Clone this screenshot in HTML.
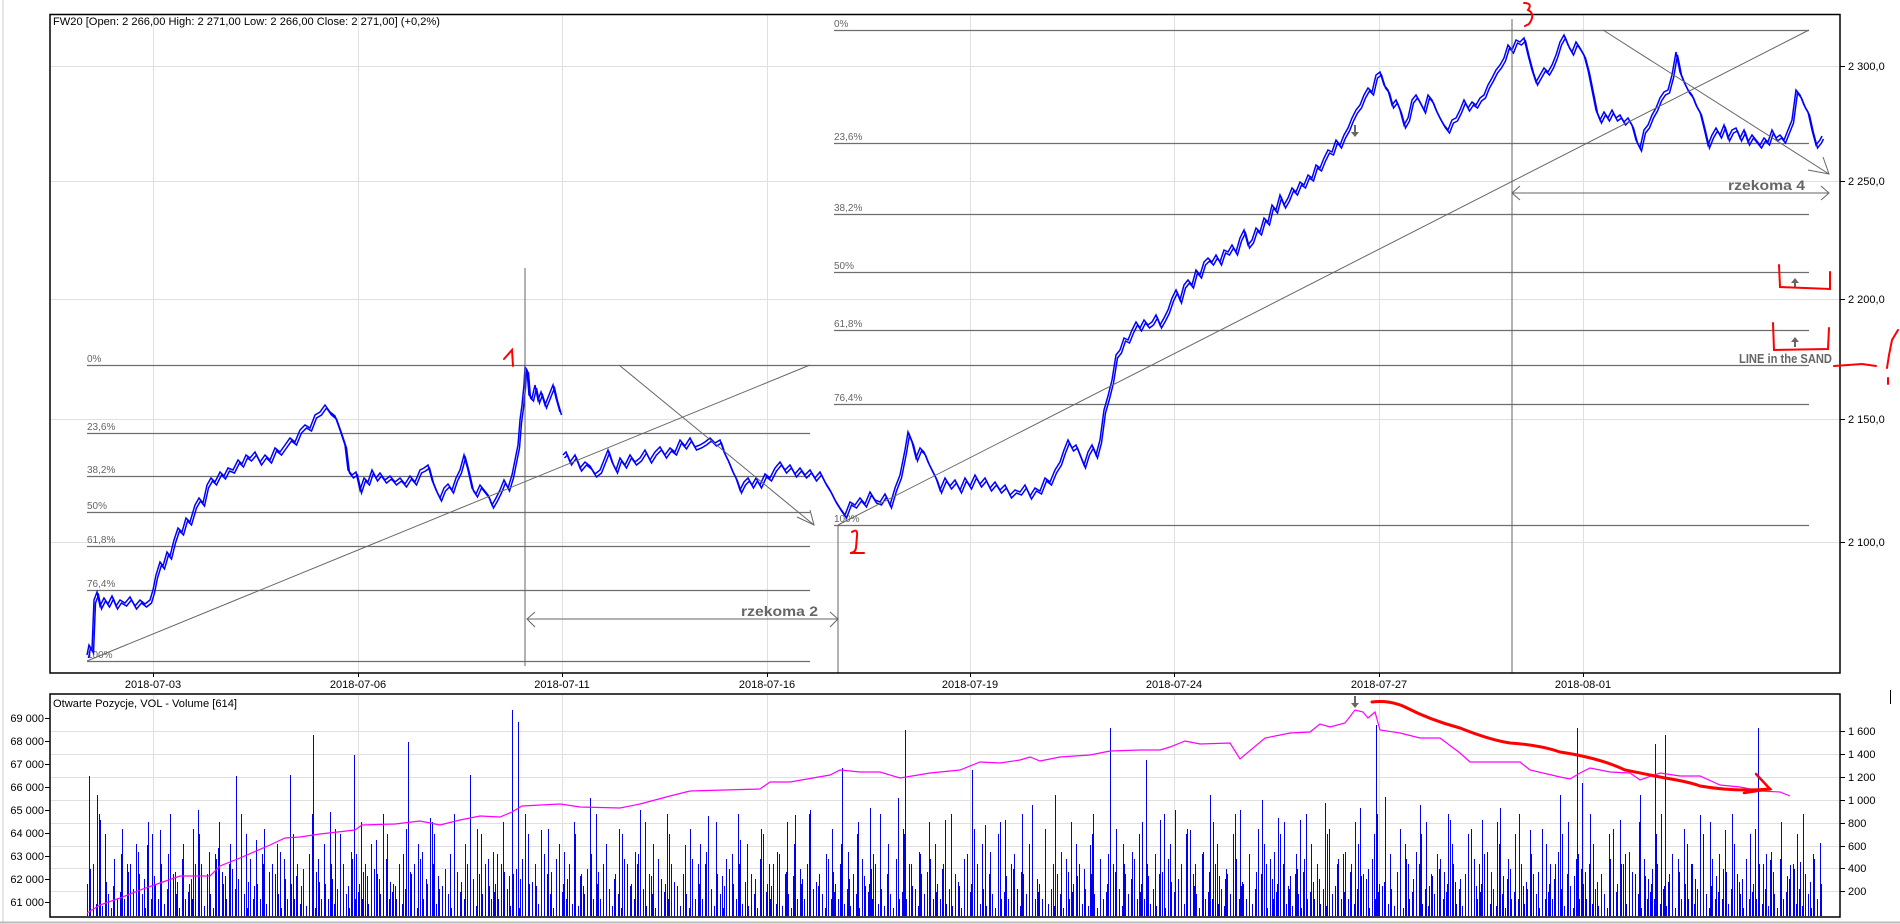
<!DOCTYPE html>
<html><head><meta charset="utf-8">
<style>
html,body{margin:0;padding:0;background:#fff;width:1900px;height:924px;overflow:hidden}
svg{display:block}
text{font-family:"Liberation Sans",sans-serif;}
</style></head>
<body>
<svg width="1900" height="924" xmlns="http://www.w3.org/2000/svg">
<defs>
<pattern id="vp1" x="87" y="694" width="34" height="222" patternUnits="userSpaceOnUse">
<path stroke="#0000ee" stroke-width="1" d="M0.5 222V190 M3.5 222V205 M6.5 222V170 M9.5 222V210 M12.5 222V195 M15.5 222V212 M18.5 222V180 M21.5 222V200 M24.5 222V214 M27.5 222V165 M30.5 222V205 M33.5 222V198"/>
</pattern>
<pattern id="vp2" x="88" y="694" width="47" height="222" patternUnits="userSpaceOnUse">
<path stroke="#0000ee" stroke-width="1" d="M1.5 222V150 M9.5 222V185 M17.5 222V140 M25.5 222V192 M33.5 222V160 M40.5 222V178"/>
</pattern>
<pattern id="vp3" x="86" y="694" width="71" height="222" patternUnits="userSpaceOnUse">
<path stroke="#0000ee" stroke-width="1" d="M4.5 222V175 M13.5 222V120 M20.5 222V188 M36.5 222V135 M44.5 222V170 M52.5 222V158 M62.5 222V128 M68.5 222V182"/>
</pattern>
<path id="pr" d="M87 655 L89 645 L92 650 L94 600 L97 592 L100 606 L104 598 L108 604 L112 596 L116 606 L120 600 L125 603 L130 597 L135 606 L140 600 L145 604 L150 600 L153 590 L156 575 L160 562 L163 566 L167 552 L170 556 L174 540 L178 528 L182 532 L186 518 L190 522 L195 505 L199 498 L203 503 L207 485 L211 478 L215 482 L220 472 L224 476 L228 468 L233 470 L238 460 L242 464 L246 455 L250 458 L255 452 L260 462 L265 455 L270 460 L275 448 L280 452 L285 445 L290 438 L295 442 L300 430 L305 425 L310 428 L315 415 L320 412 L325 405 L330 412 L335 416 L340 430 L345 445 L348 470 L352 475 L356 472 L360 490 L364 478 L368 482 L372 470 L376 478 L380 473 L385 480 L390 476 L395 482 L400 478 L405 484 L410 476 L415 482 L420 470 L424 468 L428 465 L432 480 L436 490 L440 498 L444 488 L448 484 L452 490 L456 478 L460 470 L464 455 L468 470 L472 488 L476 494 L480 485 L484 490 L488 495 L492 505 L496 498 L500 490 L504 480 L508 488 L512 475 L515 460 L518 445 L520 420 L522 405 L524 385 L525 367 L527 370 L529 395 L532 398 L535 385 L538 400 L541 392 L545 405 L549 395 L553 385 L556 398 L560 412
M563 455 L566 452 L570 462 L575 455 L580 468 L585 462 L590 466 L595 474 L600 470 L604 460 L608 450 L612 462 L616 470 L620 458 L625 465 L630 455 L635 462 L640 458 L645 450 L650 460 L655 452 L660 447 L665 455 L670 448 L675 452 L680 440 L685 446 L690 438 L695 447 L700 445 L705 442 L710 438 L715 443 L720 440 L724 452 L728 460 L732 470 L736 478 L740 490 L744 482 L748 478 L752 485 L756 478 L760 485 L765 474 L770 478 L775 468 L780 462 L785 470 L790 465 L795 474 L800 468 L805 475 L810 470 L815 478 L820 472 L825 482 L830 490 L835 500 L840 508 L845 515 L850 502 L855 505 L860 498 L865 504 L870 492 L875 500 L880 502 L885 494 L890 505 L895 488 L900 475 L905 450 L908 432 L912 442 L916 458 L920 448 L924 452 L928 462 L932 470 L936 478 L940 490 L945 478 L950 486 L955 480 L960 490 L965 478 L970 486 L975 475 L980 484 L985 478 L990 488 L995 482 L1000 490 L1005 485 L1010 495 L1015 490 L1020 492 L1025 485 L1030 496 L1035 488 L1040 491 L1045 478 L1050 482 L1055 470 L1060 462 L1064 450 L1068 440 L1072 448 L1076 445 L1080 455 L1084 465 L1088 452 L1092 445 L1096 455 L1100 440 L1104 410 L1108 396 L1112 380 L1116 355 L1120 350 L1124 338 L1128 340 L1132 330 L1136 322 L1140 328 L1144 320 L1148 325 L1152 322 L1156 315 L1160 325 L1164 318 L1168 310 L1172 298 L1176 290 L1180 300 L1184 285 L1188 280 L1192 285 L1196 270 L1200 275 L1204 262 L1208 258 L1212 262 L1216 255 L1220 262 L1224 250 L1228 252 L1232 245 L1236 252 L1240 238 L1244 230 L1248 245 L1252 240 L1256 228 L1260 232 L1264 218 L1268 222 L1272 205 L1276 210 L1280 195 L1284 205 L1288 198 L1292 188 L1296 192 L1300 182 L1304 185 L1308 175 L1312 178 L1316 165 L1320 168 L1324 158 L1328 150 L1332 152 L1336 140 L1340 145 L1344 135 L1348 128 L1352 118 L1356 110 L1360 105 L1364 95 L1368 88 L1372 92 L1376 75 L1380 72 L1384 85 L1388 90 L1392 105 L1396 100 L1400 110 L1404 125 L1408 118 L1412 100 L1416 95 L1420 102 L1424 110 L1428 95 L1432 100 L1436 110 L1440 118 L1444 125 L1448 130 L1452 120 L1456 118 L1460 110 L1464 100 L1468 108 L1472 102 L1476 105 L1480 98 L1484 95 L1488 85 L1492 78 L1496 70 L1500 65 L1504 58 L1508 45 L1512 50 L1516 40 L1520 42 L1524 38 L1528 55 L1532 70 L1536 82 L1540 75 L1544 68 L1548 72 L1552 65 L1556 55 L1560 42 L1564 35 L1568 45 L1572 52 L1576 42 L1580 48 L1584 55 L1588 70 L1592 90 L1596 110 L1600 120 L1604 112 L1608 118 L1612 110 L1616 118 L1620 115 L1624 122 L1628 118 L1632 125 L1636 140 L1640 148 L1644 130 L1648 125 L1652 115 L1656 108 L1660 98 L1664 92 L1668 90 L1672 75 L1676 52 L1680 72 L1684 82 L1688 90 L1692 95 L1696 105 L1700 112 L1704 128 L1708 145 L1712 135 L1716 128 L1720 135 L1724 125 L1728 138 L1732 130 L1736 128 L1740 138 L1744 130 L1748 142 L1752 135 L1756 140 L1760 145 L1764 138 L1768 142 L1772 130 L1776 138 L1780 135 L1784 140 L1788 130 L1792 120 L1796 90 L1800 95 L1804 105 L1808 112 L1812 130 L1816 145 L1820 140 L1822 136"/>
</defs>
<rect width="1900" height="924" fill="#fff"/>
<line x1="3" y1="0" x2="3" y2="924" stroke="#ccc"/>
<line x1="0" y1="922.5" x2="1900" y2="922.5" stroke="#bbb" stroke-width="2"/>
<g stroke="#e0e0e0" stroke-width="1">
<path d="M153.5 15V672 M358.5 15V672 M562.5 15V672 M767.5 15V672 M970.5 15V672 M1174.5 15V672 M1379.5 15V672 M1583.5 15V672"/>
<path d="M153.5 695V916 M358.5 695V916 M562.5 695V916 M767.5 695V916 M970.5 695V916 M1174.5 695V916 M1379.5 695V916 M1583.5 695V916"/>
<path d="M51 66.5H1839 M51 181.5H1839 M51 299.5H1839 M51 419.5H1839 M51 542.5H1839"/>
<path d="M51 731.5H1839 M51 754.5H1839 M51 777.5H1839 M51 800.5H1839 M51 823.5H1839 M51 846.5H1839 M51 868.5H1839 M51 891.5H1839"/>
</g>
<rect x="87" y="694" width="1735" height="222" fill="url(#vp1)"/>
<rect x="88" y="694" width="1734" height="222" fill="url(#vp2)"/>
<rect x="86" y="694" width="1736" height="222" fill="url(#vp3)"/>
<path stroke="#0000ee" stroke-width="1" fill="none" d="M89.5 916V776 M97.5 916V795 M100.5 916V820 M147.5 916V845 M160.5 916V830 M198.5 916V810 M218.5 916V848 M236.5 916V776 M256.5 916V840 M290.5 916V775 M313.5 916V735 M330.5 916V812 M354.5 916V755 M376.5 916V840 M408.5 916V742 M430.5 916V818 M470.5 916V775 M512.5 916V710 M518.5 916V722 M541.5 916V830 M590.5 916V798 M640.5 916V810 M685.5 916V845 M708.5 916V816 M740.5 916V840 M795.5 916V815 M810.5 916V810 M842.5 916V768 M870.5 916V808 M898.5 916V798 M905.5 916V730 M945.5 916V820 M972.5 916V770 M985.5 916V825 M1005.5 916V820 M1032.5 916V805 M1055.5 916V795 M1090.5 916V845 M1110.5 916V728 M1146.5 916V760 M1160.5 916V820 M1175.5 916V810 M1190.5 916V830 M1210.5 916V795 M1240.5 916V810 M1262.5 916V800 M1278.5 916V818 M1300.5 916V820 M1325.5 916V803 M1360.5 916V808 M1376.5 916V725 M1385.5 916V797 M1420.5 916V805 M1450.5 916V820 M1482.5 916V820 M1500.5 916V808 M1530.5 916V830 M1560.5 916V795 M1577.5 916V728 M1582.5 916V783 M1620.5 916V820 M1640.5 916V795 M1655.5 916V744 M1665.5 916V735 M1700.5 916V815 M1725.5 916V830 M1758.5 916V728 M1770.5 916V860 M1790.5 916V865 M1800.5 916V862 M1820.5 916V843"/>
<path fill="none" stroke="#ff00ff" stroke-width="1.2" d="M87 913 L100 905 L120 898 L140 890 L160 883 L180 876 L210 876 L220 866 L240 858 L270 845 L285 838 L300 837 L320 834 L355 830 L362 825 L395 824 L420 821 L440 825 L460 820 L480 816 L500 817 L512 812 L522 806 L560 804 L580 807 L620 808 L640 804 L670 796 L690 791 L760 789 L770 782 L790 782 L830 775 L840 770 L860 772 L880 772 L900 778 L930 773 L960 770 L980 762 L1000 763 L1020 760 L1030 757 L1040 761 L1060 757 L1090 755 L1110 751 L1140 750 L1160 750 L1170 747 L1185 741 L1200 744 L1230 743 L1240 759 L1265 738 L1290 733 L1310 732 L1320 724 L1330 727 L1345 723 L1355 710 L1363 712 L1368 718 L1375 712 L1380 730 L1400 733 L1420 738 L1440 738 L1460 753 L1470 762 L1520 762 L1530 770 L1560 777 L1570 779 L1580 773 L1590 768 L1610 772 L1630 773 L1640 780 L1660 773 L1680 776 L1700 776 L1720 785 L1740 787 L1760 791 L1780 792 L1790 796"/>
<g stroke="#6e6e6e" stroke-width="1.2">
<path d="M87 365.5H1809 M87 433.5H810 M87 476.5H810 M87 512.5H810 M87 546.5H810 M87 590.5H810 M87 661.5H810"/>
<path d="M834 30.5H1809 M834 143.5H1809 M834 214.5H1809 M834 272.5H1809 M834 330.5H1809 M834 404.5H1809 M834 525.5H1809"/>
</g>
<g font-size="10" fill="#666">
<text x="87" y="362">0%</text><text x="87" y="430">23,6%</text><text x="87" y="473">38,2%</text><text x="87" y="509">50%</text><text x="87" y="543">61,8%</text><text x="87" y="587">76,4%</text><text x="87" y="658">100%</text>
<text x="834" y="27">0%</text><text x="834" y="140">23,6%</text><text x="834" y="211">38,2%</text><text x="834" y="269">50%</text><text x="834" y="327">61,8%</text><text x="834" y="401">76,4%</text><text x="834" y="522">100%</text>
</g>
<g fill="none" stroke="#0000ff" stroke-width="1.5">
<use href="#pr"/>
<use href="#pr" transform="translate(1.5,3)"/>
</g>
<g stroke="#666" stroke-width="1" fill="none">
<line x1="87" y1="661" x2="810" y2="365"/>
<line x1="619" y1="365" x2="814" y2="525"/>
<path d="M797 517 L814 525 L810 510"/>
<line x1="838" y1="525" x2="1809" y2="30"/>
<line x1="1603" y1="30" x2="1829" y2="174"/>
<path d="M1808 170 L1829 174 L1823 157"/>
<line x1="525" y1="268" x2="525" y2="666"/>
<line x1="838" y1="525" x2="838" y2="673"/>
<line x1="1512" y1="19" x2="1512" y2="673"/>
<line x1="527" y1="619" x2="838" y2="619"/>
<path d="M535 612 L527 619 L535 627 M830 612 L838 619 L830 627"/>
<line x1="1512" y1="193" x2="1829" y2="193"/>
<path d="M1520 186 L1512 193 L1520 200 M1821 186 L1829 193 L1821 200"/>
</g>
<g fill="#666">
<path d="M1791 283 h8 l-4 -5z M1794 283 h2 v5 h-2z"/>
<path d="M1791 342 h8 l-4 -5z M1794 342 h2 v5 h-2z"/>
<path d="M1351 132 h8 l-4 5z M1354 125 h2 v7 h-2z"/>
<path d="M1351 703 h8 l-4 5z M1354 696 h2 v7 h-2z"/>
</g>
<g font-size="14" font-weight="bold" fill="#666" text-anchor="end">
<text x="818" y="616" textLength="77" lengthAdjust="spacingAndGlyphs">rzekoma 2</text>
<text x="1805" y="190" textLength="77" lengthAdjust="spacingAndGlyphs">rzekoma 4</text>
<text x="1832" y="363" textLength="93" lengthAdjust="spacingAndGlyphs" font-size="13">LINE in the SAND</text>
</g>
<g fill="none" stroke="#000" stroke-width="1.5">
<rect x="50" y="14.5" width="1790" height="658.5"/>
<rect x="50" y="694" width="1790" height="223"/>
</g>
<g stroke="#000" stroke-width="1">
<path d="M153.5 673V677 M358.5 673V677 M562.5 673V677 M767.5 673V677 M970.5 673V677 M1174.5 673V677 M1379.5 673V677 M1583.5 673V677"/>
<path d="M1840 66.5H1845 M1840 181.5H1845 M1840 299.5H1845 M1840 419.5H1845 M1840 542.5H1845"/>
<path d="M1840 731.5H1845 M1840 754.5H1845 M1840 777.5H1845 M1840 800.5H1845 M1840 823.5H1845 M1840 846.5H1845 M1840 868.5H1845 M1840 891.5H1845"/>
<path d="M45 718.5H50 M45 741.5H50 M45 764.5H50 M45 787.5H50 M45 810.5H50 M45 833.5H50 M45 856.5H50 M45 879.5H50 M45 902.5H50"/>
<path d="M1890.5 690V704"/>
</g>
<g font-size="11" fill="#000">
<g text-anchor="middle">
<text x="153" y="688">2018-07-03</text><text x="358" y="688">2018-07-06</text><text x="562" y="688">2018-07-11</text><text x="767" y="688">2018-07-16</text><text x="970" y="688">2018-07-19</text><text x="1174" y="688">2018-07-24</text><text x="1379" y="688">2018-07-27</text><text x="1583" y="688">2018-08-01</text>
</g>
<text x="1848" y="70">2 300,0</text><text x="1848" y="185">2 250,0</text><text x="1848" y="303">2 200,0</text><text x="1848" y="423">2 150,0</text><text x="1848" y="546">2 100,0</text>
<text x="1848" y="735">1 600</text><text x="1848" y="758">1 400</text><text x="1848" y="781">1 200</text><text x="1848" y="804">1 000</text><text x="1848" y="827">800</text><text x="1848" y="850">600</text><text x="1848" y="872">400</text><text x="1848" y="895">200</text>
<g text-anchor="end">
<text x="44" y="722">69 000</text><text x="44" y="745">68 000</text><text x="44" y="768">67 000</text><text x="44" y="791">66 000</text><text x="44" y="814">65 000</text><text x="44" y="837">64 000</text><text x="44" y="860">63 000</text><text x="44" y="883">62 000</text><text x="44" y="906">61 000</text>
</g>
<text x="53" y="25" textLength="387" lengthAdjust="spacingAndGlyphs">FW20 [Open: 2 266,00  High: 2 271,00  Low: 2 266,00  Close: 2 271,00] (+0,2%)</text>
<text x="53" y="707" textLength="184" lengthAdjust="spacingAndGlyphs">Otwarte Pozycje, VOL - Volume [614]</text>
</g>
<g fill="none" stroke="#f00" stroke-width="2" stroke-linecap="round">
<path d="M504 359 L512 350 L513 366"/>
<path d="M852 532 Q858 528 857 536 L856 548 Q855 553 850 553 L864 553"/>
<path d="M1524 3 Q1533 3 1528 10 Q1536 14 1529 24 L1525 26"/>
<path d="M1779 265 L1780 287 L1830 289 L1830 272"/>
<path d="M1773 323 L1774 350 L1828 349 L1829 328"/>
<path d="M1834 366 L1862 364 L1876 366"/>
<path d="M1898 330 L1892 340 L1889 355 L1887 368 M1888 378 L1888 384"/>
<path stroke-width="3" d="M1372 702 Q1390 700 1405 707 Q1430 720 1460 728 Q1490 740 1510 743 Q1540 745 1560 752 Q1600 758 1625 770 Q1650 775 1665 778 Q1690 782 1700 786 Q1735 792 1770 789"/>
<path stroke-width="2.5" d="M1756 774 L1770 789 L1744 793"/>
</g>
</svg>
</body></html>
